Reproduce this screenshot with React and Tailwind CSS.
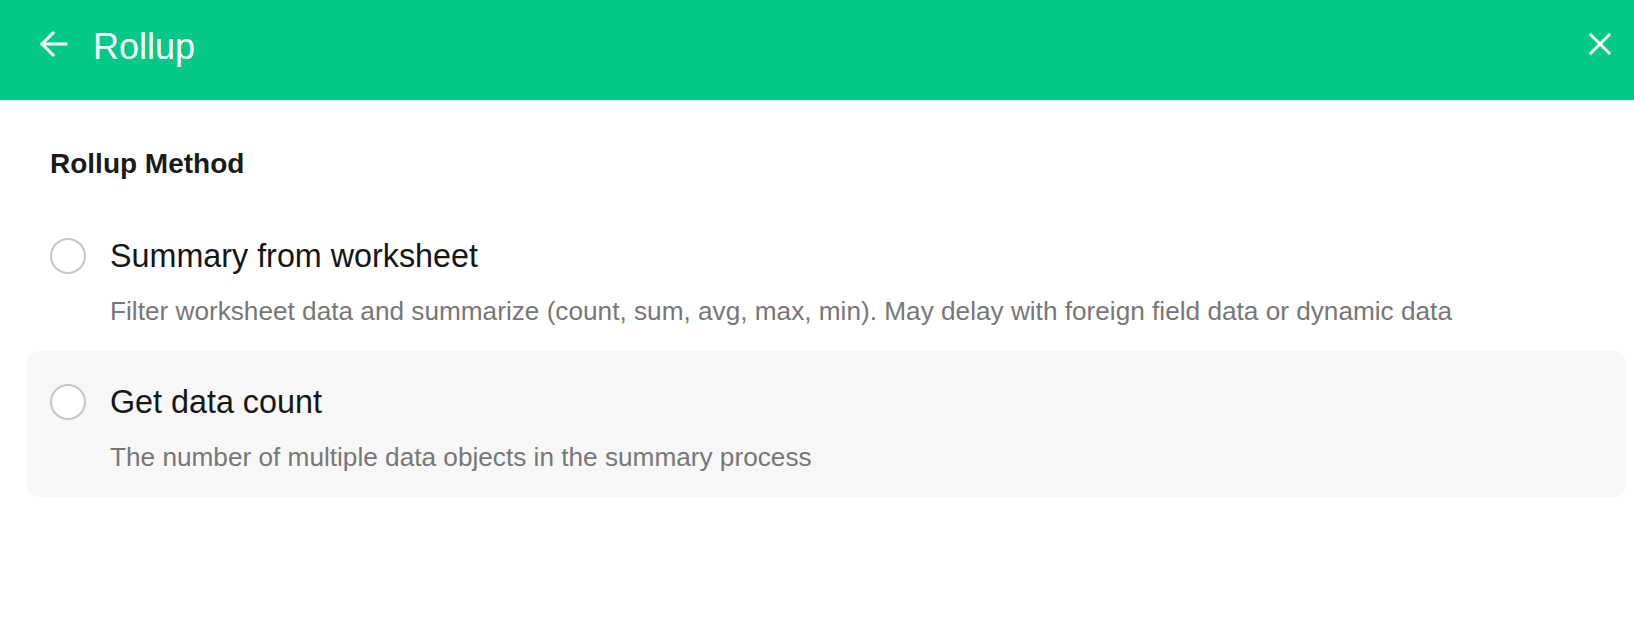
import React, { useState } from 'react';

const options = [
  {
    id: 'summary',
    title: 'Summary from worksheet',
    desc: 'Filter worksheet data and summarize (count, sum, avg, max, min). May delay with foreign field data or dynamic data',
  },
  {
    id: 'count',
    title: 'Get data count',
    desc: 'The number of multiple data objects in the summary process',
  },
];

const App = () => {
  const [selected, setSelected] = useState(null);
  const [hovered, setHovered] = useState('count');

  return (
    <div className="min-h-screen w-full bg-white" style={{ fontFamily: '"Liberation Sans", Arial, Helvetica, sans-serif' }}>
      {/* Header */}
      <div className="flex h-[100px] items-start bg-[#03c987] text-white">
        <button className="ml-[40px] mt-[30px] h-[28px] w-[28px]">
          <svg width="28" height="28" viewBox="0 0 28 28" fill="none" stroke="white" strokeWidth="3" strokeLinecap="square">
            <path d="M2 14H26" />
            <path d="M14 2L2 14L14 26" strokeLinecap="butt" strokeLinejoin="miter" />
          </svg>
        </button>
        <h1 className="ml-[25px] mt-[29px] text-[36px] leading-[36px] font-normal">Rollup</h1>
        <button className="ml-auto mr-[23px] mt-[33px] h-[22px] w-[22px]">
          <svg width="22" height="22" viewBox="0 0 22 22" fill="none" stroke="white" strokeWidth="3">
            <path d="M1 1L21 21" />
            <path d="M21 1L1 21" />
          </svg>
        </button>
      </div>

      {/* Body */}
      <div className="pl-[26px] pr-[8px]">
        <h2 className="mt-[44px] pl-[24px] text-[28px] leading-[40px] font-bold text-[#1a1a1a]">Rollup Method</h2>

        <div className="mt-[21px] flex flex-col">
          {options.map((opt) => (
            <div
              key={opt.id}
              onClick={() => setSelected(opt.id)}
              onMouseEnter={() => setHovered(opt.id)}
              className={`cursor-pointer rounded-[14px] px-[24px] pt-[29px] pb-[22px] ${hovered === opt.id ? 'bg-[#f7f7f7]' : 'bg-white'}`}
            >
              <div className="flex items-center gap-[24px]">
                <span
                  className={`h-[36px] w-[36px] shrink-0 rounded-full border-2 bg-white ${selected === opt.id ? 'border-[#03c987]' : 'border-[#c6c6c6]'}`}
                />
                <span className="text-[32.3px] leading-[44px] text-[#161616]">{opt.title}</span>
              </div>
              <p className="mt-[15px] pl-[60px] text-[26.2px] leading-[36px] text-[#777777]">{opt.desc}</p>
            </div>
          ))}
        </div>
      </div>
    </div>
  );
};

export default App;
